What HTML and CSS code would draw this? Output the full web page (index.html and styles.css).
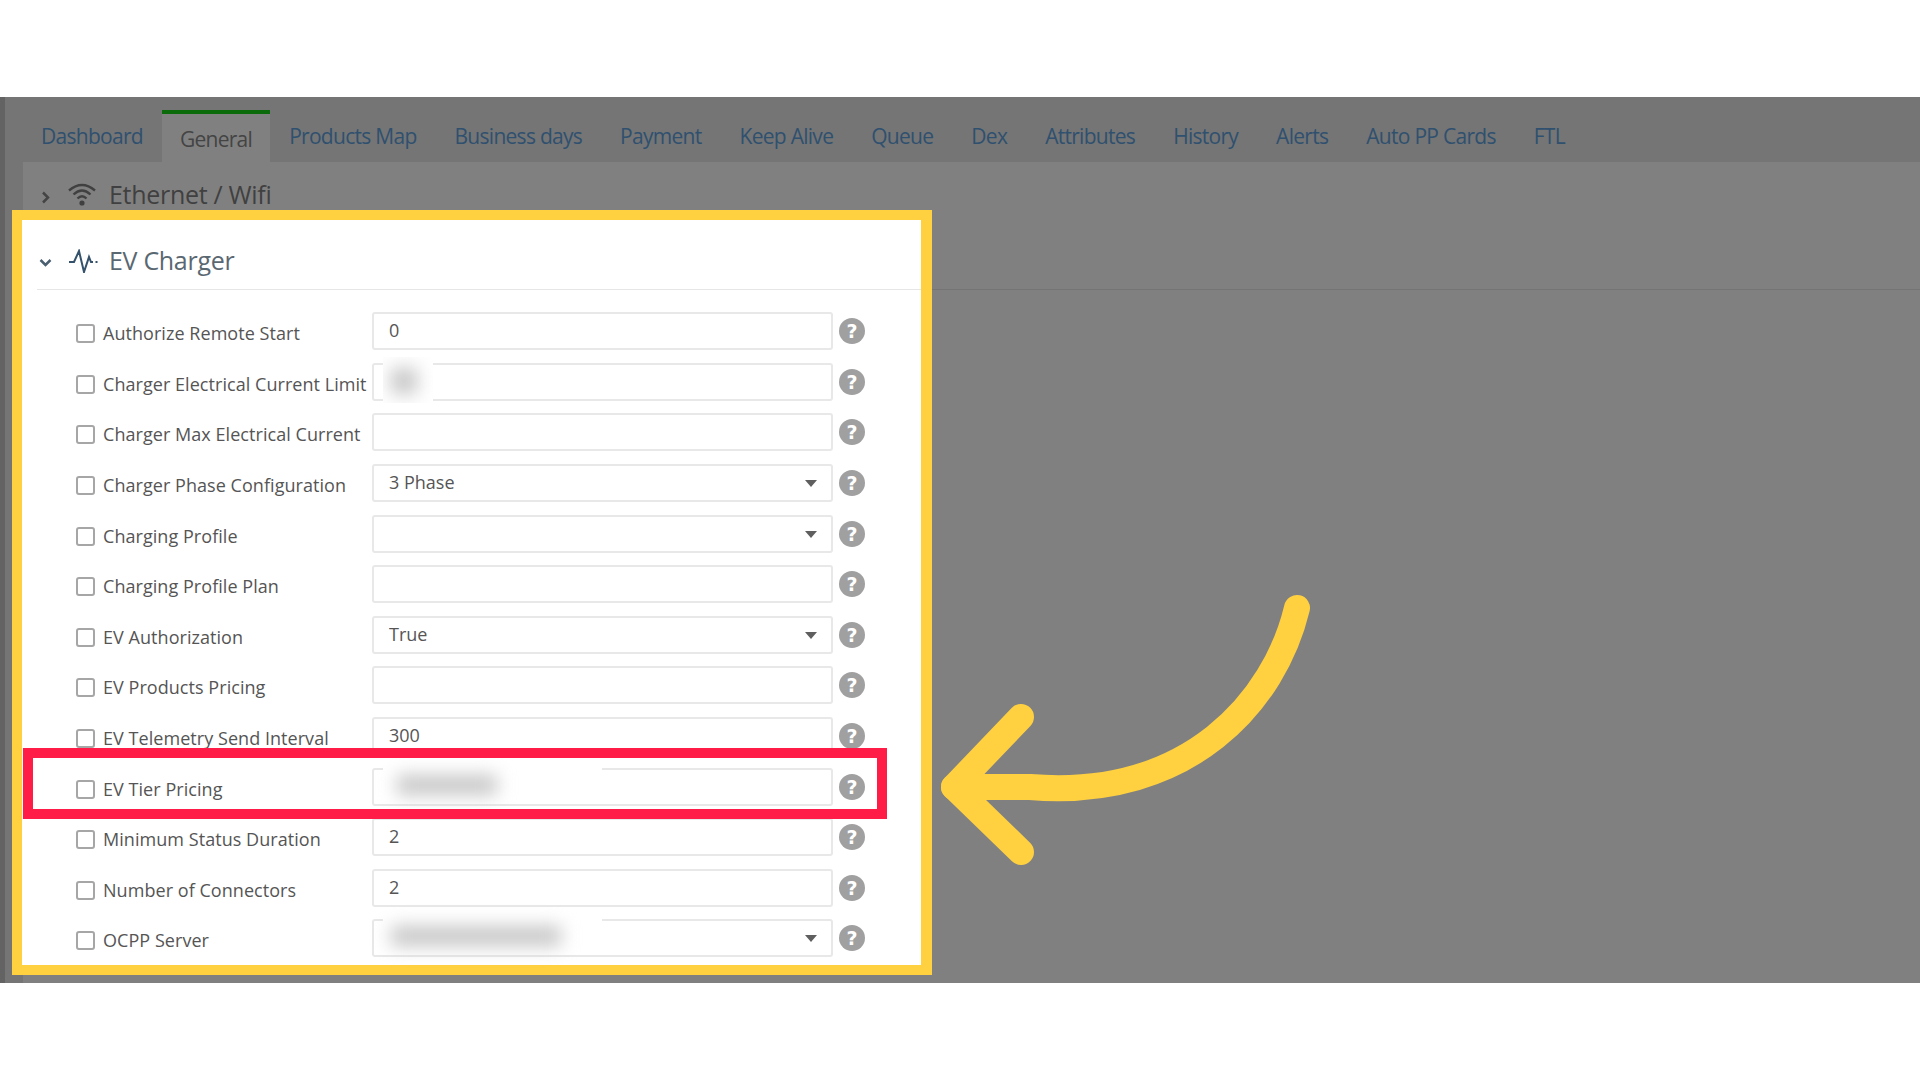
FILE: index.html
```html
<!DOCTYPE html>
<html lang="en">

<head>
    <meta charset="UTF-8">
    <meta name="viewport" content="width=device-width, initial-scale=1.0">
    <title>EV Charger settings</title>
    <link rel="stylesheet" href="styles.css">
</head>

<body>
    <div class="shot">
        <nav class="tabs">
            <a class="tab">Dashboard</a>
            <a class="tab active">General</a>
            <a class="tab">Products Map</a>
            <a class="tab">Business days</a>
            <a class="tab">Payment</a>
            <a class="tab">Keep Alive</a>
            <a class="tab">Queue</a>
            <a class="tab">Dex</a>
            <a class="tab">Attributes</a>
            <a class="tab">History</a>
            <a class="tab">Alerts</a>
            <a class="tab">Auto PP Cards</a>
            <a class="tab">FTL</a>
        </nav>

        <div class="content">
            <div class="section-head dim">
                <svg class="chevron" viewBox="0 0 12 12"><path d="M4 2l4 4-4 4" /></svg>
                <svg class="section-icon" viewBox="0 0 30 24">
                    <path d="M2 8.500Q15-2.500 28 8.500M6.500 12.500Q15 4.500 23.500 12.500M10.500 16.500Q15 12 19.500 16.500" />
                    <circle cx="15" cy="21" r="2.600" />
                </svg>
                <span class="section-title">Ethernet / Wifi</span>
            </div>

            <div class="panel-row">
                <section class="frame">
                    <div class="section-head">
                        <svg class="chevron" viewBox="0 0 12 12"><path d="M2 4l4 4 4-4" /></svg>
                        <svg class="section-icon pulse" viewBox="0 0 30 24">
                            <path d="M1 13H6L11 2L16 23L21 8L23 13H25M27.500 13H29.500" />
                        </svg>
                        <span class="section-title">EV Charger</span>
                    </div>

                    <form class="rows">
                        <div class="row">
                            <input type="checkbox"><label>Authorize Remote Start</label>
                            <div class="field"><input type="text" value="0"></div>
                            <span class="help">?</span>
                        </div>
                        <div class="row">
                            <input type="checkbox"><label>Charger Electrical Current Limit</label>
                            <div class="field"><input type="text">
                                <div class="patch patch-small"><i></i></div>
                            </div>
                            <span class="help">?</span>
                        </div>
                        <div class="row">
                            <input type="checkbox"><label>Charger Max Electrical Current</label>
                            <div class="field"><input type="text"></div>
                            <span class="help">?</span>
                        </div>
                        <div class="row">
                            <input type="checkbox"><label>Charger Phase Configuration</label>
                            <div class="field select"><input type="text" value="3 Phase"></div>
                            <span class="help">?</span>
                        </div>
                        <div class="row">
                            <input type="checkbox"><label>Charging Profile</label>
                            <div class="field select"><input type="text"></div>
                            <span class="help">?</span>
                        </div>
                        <div class="row">
                            <input type="checkbox"><label>Charging Profile Plan</label>
                            <div class="field"><input type="text"></div>
                            <span class="help">?</span>
                        </div>
                        <div class="row">
                            <input type="checkbox"><label>EV Authorization</label>
                            <div class="field select"><input type="text" value="True"></div>
                            <span class="help">?</span>
                        </div>
                        <div class="row">
                            <input type="checkbox"><label>EV Products Pricing</label>
                            <div class="field"><input type="text"></div>
                            <span class="help">?</span>
                        </div>
                        <div class="row">
                            <input type="checkbox"><label>EV Telemetry Send Interval</label>
                            <div class="field"><input type="text" value="300"></div>
                            <span class="help">?</span>
                        </div>
                        <div class="row">
                            <input type="checkbox"><label>EV Tier Pricing</label>
                            <div class="field"><input type="text">
                                <div class="patch patch-wide"><i class="blur-tier"></i></div>
                            </div>
                            <span class="help">?</span>
                        </div>
                        <div class="row">
                            <input type="checkbox"><label>Minimum Status Duration</label>
                            <div class="field"><input type="text" value="2"></div>
                            <span class="help">?</span>
                        </div>
                        <div class="row">
                            <input type="checkbox"><label>Number of Connectors</label>
                            <div class="field"><input type="text" value="2"></div>
                            <span class="help">?</span>
                        </div>
                        <div class="row">
                            <input type="checkbox"><label>OCPP Server</label>
                            <div class="field select"><input type="text">
                                <div class="patch patch-wide"><i class="blur-ocpp"></i></div>
                            </div>
                            <span class="help">?</span>
                        </div>
                    </form>
                </section>
                <div class="rest"></div>
            </div>
        </div>

        <div class="red-box"></div>

        <svg class="arrow" viewBox="0 0 1920 1080">
            <path d="M1297 608C1275 700 1190 800 1030 787L954 787" />
            <path d="M1021 717L954 787L1021 852" />
        </svg>
    </div>
</body>

</html>
```

FILE: styles.css
```css
body {
    margin: 0;
    height: 1080px;
    overflow: hidden;
    background-color: #fff;
    font-family: "Open Sans", "Noto Sans", sans-serif;
}

.shot {
    margin-top: 97px;
    height: 886px;
    border-left: 5px solid #636363;
    background-color: #757575;
    box-sizing: border-box;
}

/* tabs */
.tabs {
    display: flex;
    height: 65px;
    padding-left: 17px;
}

.tab {
    display: flex;
    align-items: center;
    padding: 12px 19px 0;
    font-size: 21px;
    letter-spacing: -0.72px;
    color: #2f506f;
}

.tab.active {
    box-sizing: border-box;
    height: 52px;
    margin-top: 13px;
    padding: 1px 18px 0;
    border-top: 4px solid #0b6b0b;
    background-color: #808080;
    color: #444;
}

/* page under the tabs */
.content {
    margin-left: 18px;
    height: 821px;
    background-color: #808080;
}

.section-head {
    display: flex;
    align-items: center;
    height: 48px;
    padding-left: 15px;
}

.section-head.dim {
    box-sizing: border-box;
    padding-top: 16px;
    color: #404040;
}

.chevron {
    flex: none;
    width: 15px;
    height: 15px;
    margin-right: 14px;
    margin-top: 6px;
    fill: none;
    stroke: #444;
    stroke-width: 2;
}

.section-icon {
    flex: none;
    width: 30px;
    height: 24px;
    margin-right: 12px;
    fill: #404040;
    stroke: none;
}

.section-icon path {
    fill: none;
    stroke: #404040;
    stroke-width: 2.400;
}

.section-title {
    font-size: 25px;
    letter-spacing: -0.3px;
}

.panel-row {
    display: flex;
    align-items: flex-start;
}

.rest {
    flex: 1;
    margin-top: 79px;
    border-top: 1px solid #747474;
}

/* highlighted panel */
.frame {
    box-sizing: border-box;
    flex: none;
    width: 920px;
    height: 765px;
    margin-left: -11px;
    border: solid #ffd040;
    border-width: 10px 11px 10px 10px;
    background-color: #fff;
    color: #5a6872;
}

.frame .section-head {
    box-sizing: border-box;
    height: 70px;
    margin-left: 15px;
    padding-left: 1px;
    padding-top: 10px;
    border-bottom: 1px solid #e6e6e6;
}

.frame .chevron {
    margin-right: 15px;
    stroke: #4a6070;
}

.frame .section-icon {
    margin-right: 11px;
    margin-top: 2px;
}

.frame .section-icon path {
    stroke: #34526b;
    stroke-width: 2;
}

.rows {
    padding-top: 16px;
}

.row {
    display: flex;
    align-items: center;
    height: 50.600px;
    padding-left: 54px;
}

.row input[type="checkbox"] {
    appearance: none;
    flex: none;
    width: 19px;
    height: 19px;
    margin: 5px 8px 0 0;
    border: 2px solid #a6a6a6;
    border-radius: 3px;
    background-color: #fff;
    box-sizing: border-box;
}

.row label {
    flex: none;
    width: 269px;
    padding-top: 4px;
    font-size: 18px;
    letter-spacing: 0.05px;
    color: #555;
    white-space: nowrap;
}

.field {
    position: relative;
    flex: none;
    width: 461px;
    height: 38px;
}

.field input {
    width: 100%;
    height: 100%;
    box-sizing: border-box;
    padding: 0 15px 2px;
    border: 2px solid #e8e8e8;
    border-radius: 3px;
    background-color: #fff;
    font-family: inherit;
    font-size: 18px;
    color: #555;
    outline: none;
}

/* dropdown caret */
.field.select::after {
    content: "";
    position: absolute;
    top: 16px;
    right: 16px;
    border-top: 7px solid #5f5f5f;
    border-left: 6px solid transparent;
    border-right: 6px solid transparent;
}

.help {
    flex: none;
    width: 26px;
    height: 26px;
    margin-left: 6px;
    border-radius: 50%;
    background-color: #a0a0a0;
    color: #fff;
    font-family: "DejaVu Sans", sans-serif;
    font-size: 19px;
    font-weight: bold;
    line-height: 26px;
    text-align: center;
}

/* blurred out values */
.patch {
    position: absolute;
    left: 11px;
    background-color: #fff;
}

.patch i {
    display: block;
    position: absolute;
    background-color: #c6c6c6;
    filter: blur(9px);
}

.patch-small {
    top: -6px;
    width: 50px;
    height: 46px;
    overflow: hidden;
}

.patch-small i {
    top: 11px;
    left: 8px;
    width: 26px;
    height: 26px;
}

.patch-wide {
    top: -3px;
    width: 219px;
    height: 18px;
}

.blur-tier {
    top: 10px;
    left: 14px;
    width: 100px;
    height: 20px;
}

.blur-ocpp {
    top: 10px;
    left: 8px;
    width: 170px;
    height: 20px;
}

/* annotations over the screenshot */
.red-box {
    position: absolute;
    left: 23px;
    top: 748px;
    width: 864px;
    height: 71px;
    box-sizing: border-box;
    border: 10px solid #ff1c47;
}

.arrow {
    position: absolute;
    left: 0;
    top: 0;
    width: 1920px;
    height: 1080px;
    fill: none;
    stroke: #ffd040;
    stroke-width: 26;
    stroke-linecap: round;
    stroke-linejoin: round;
}
```
